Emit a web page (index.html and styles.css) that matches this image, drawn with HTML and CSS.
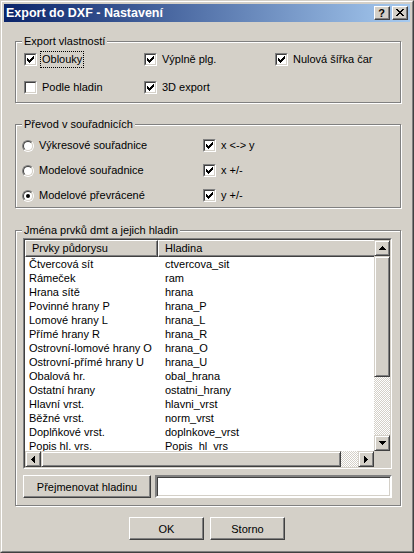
FILE: index.html
```html
<!DOCTYPE html>
<html lang="cs">
<head>
<meta charset="utf-8">
<title>Export do DXF - Nastavení</title>
<link rel="stylesheet" href="styles.css">
</head>
<body>
<div class="window">
  <div class="frame">
    <div class="titlebar">
      <span class="title">Export do DXF - Nastavení</span>
      <div class="tbtns">
        <span class="tbtn raised help">?</span>
        <span class="tbtn raised close"><svg width="8" height="7" viewBox="0 0 8 7" shape-rendering="crispEdges"><path d="M0 0h2v1H0z M6 0h2v1H6z M1 1h2v1H1z M5 1h2v1H5z M2 2h4v1H2z M3 3h2v1H3z M2 4h4v1H2z M1 5h2v1H1z M5 5h2v1H5z M0 6h2v1H0z M6 6h2v1H6z" fill="#000"/></svg></span>
      </div>
    </div>

    <div class="body">
      <div class="group g1">
        <div class="gtitle">Export vlastností</div>
        <div class="g1grid">
          <div class="opt"><span class="cb"><span class="cbi"><svg class="chk" width="7" height="7" viewBox="0 0 7 7" shape-rendering="crispEdges"><path d="M0 2V5H1V6H2V7H3V6H4V5H5V4H6V3H7V0H6V1H5V2H4V3H3V4H2V3H1V2Z" fill="#000"/></svg></span></span><span class="lbl focus">Oblouky</span></div>
          <div class="opt"><span class="cb"><span class="cbi"><svg class="chk" width="7" height="7" viewBox="0 0 7 7" shape-rendering="crispEdges"><path d="M0 2V5H1V6H2V7H3V6H4V5H5V4H6V3H7V0H6V1H5V2H4V3H3V4H2V3H1V2Z" fill="#000"/></svg></span></span><span class="lbl">Výplně plg.</span></div>
          <div class="opt"><span class="cb"><span class="cbi"><svg class="chk" width="7" height="7" viewBox="0 0 7 7" shape-rendering="crispEdges"><path d="M0 2V5H1V6H2V7H3V6H4V5H5V4H6V3H7V0H6V1H5V2H4V3H3V4H2V3H1V2Z" fill="#000"/></svg></span></span><span class="lbl">Nulová šířka čar</span></div>
          <div class="opt"><span class="cb"><span class="cbi"></span></span><span class="lbl">Podle hladin</span></div>
          <div class="opt"><span class="cb"><span class="cbi"><svg class="chk" width="7" height="7" viewBox="0 0 7 7" shape-rendering="crispEdges"><path d="M0 2V5H1V6H2V7H3V6H4V5H5V4H6V3H7V0H6V1H5V2H4V3H3V4H2V3H1V2Z" fill="#000"/></svg></span></span><span class="lbl">3D export</span></div>
        </div>
      </div>

      <div class="group g2">
        <div class="gtitle">Převod v souřadnicích</div>
        <div class="g2grid">
          <div class="opt"><span class="rd"><span class="rdi"></span></span><span class="lbl">Výkresové souřadnice</span></div>
          <div class="opt"><span class="cb"><span class="cbi"><svg class="chk" width="7" height="7" viewBox="0 0 7 7" shape-rendering="crispEdges"><path d="M0 2V5H1V6H2V7H3V6H4V5H5V4H6V3H7V0H6V1H5V2H4V3H3V4H2V3H1V2Z" fill="#000"/></svg></span></span><span class="lbl">x &lt;-&gt; y</span></div>
          <div class="opt"><span class="rd"><span class="rdi"></span></span><span class="lbl">Modelové souřadnice</span></div>
          <div class="opt"><span class="cb"><span class="cbi"><svg class="chk" width="7" height="7" viewBox="0 0 7 7" shape-rendering="crispEdges"><path d="M0 2V5H1V6H2V7H3V6H4V5H5V4H6V3H7V0H6V1H5V2H4V3H3V4H2V3H1V2Z" fill="#000"/></svg></span></span><span class="lbl">x +/-</span></div>
          <div class="opt"><span class="rd"><span class="rdi"><span class="dot"></span></span></span><span class="lbl">Modelové převrácené</span></div>
          <div class="opt"><span class="cb"><span class="cbi"><svg class="chk" width="7" height="7" viewBox="0 0 7 7" shape-rendering="crispEdges"><path d="M0 2V5H1V6H2V7H3V6H4V5H5V4H6V3H7V0H6V1H5V2H4V3H3V4H2V3H1V2Z" fill="#000"/></svg></span></span><span class="lbl">y +/-</span></div>
        </div>
      </div>

      <div class="group g3">
        <div class="gtitle">Jména prvků dmt a jejich hladin</div>
        <div class="g3in">
          <div class="list">
            <div class="list-in">
              <div class="view">
                <div class="lhead">
                  <div class="hcell raised hc1">Prvky půdorysu</div>
                  <div class="hcell raised hc2">Hladina</div>
                </div>
                <div class="rows">
                  <div class="c1">Čtvercová sít</div><div class="c2">ctvercova_sit</div>
                  <div class="c1">Rámeček</div><div class="c2">ram</div>
                  <div class="c1">Hrana sítě</div><div class="c2">hrana</div>
                  <div class="c1">Povinné hrany P</div><div class="c2">hrana_P</div>
                  <div class="c1">Lomové hrany L</div><div class="c2">hrana_L</div>
                  <div class="c1">Přímé hrany R</div><div class="c2">hrana_R</div>
                  <div class="c1">Ostrovní-lomové hrany O</div><div class="c2">hrana_O</div>
                  <div class="c1">Ostrovní-přímé hrany U</div><div class="c2">hrana_U</div>
                  <div class="c1">Obalová hr.</div><div class="c2">obal_hrana</div>
                  <div class="c1">Ostatní hrany</div><div class="c2">ostatni_hrany</div>
                  <div class="c1">Hlavní vrst.</div><div class="c2">hlavni_vrst</div>
                  <div class="c1">Běžné vrst.</div><div class="c2">norm_vrst</div>
                  <div class="c1">Doplňkové vrst.</div><div class="c2">doplnkove_vrst</div>
                  <div class="c1">Popis hl. vrs.</div><div class="c2">Popis_hl_vrs</div>
                </div>
              </div>
              <div class="vscroll">
                <div class="sbtn"><svg width="7" height="4" viewBox="0 0 7 4" shape-rendering="crispEdges"><path d="M3 0h1v1h1v1h1v1h1v1H0V3h1V2h1V1h1z" fill="#000"/></svg></div>
                <div class="sbtn vthumb"></div>
                <div class="track"></div>
                <div class="sbtn"><svg width="7" height="4" viewBox="0 0 7 4" shape-rendering="crispEdges"><path d="M0 0h7v1H6v1H5v1H4v1H3V3H2V2H1V1H0z" fill="#000"/></svg></div>
              </div>
              <div class="hscroll">
                <div class="sbtn"><svg width="4" height="7" viewBox="0 0 4 7" shape-rendering="crispEdges"><path d="M3 0h1v7H3V6H2V5H1V4H0V3h1V2h1V1h1z" fill="#000"/></svg></div>
                <div class="sbtn hthumb"></div>
                <div class="track"></div>
                <div class="sbtn"><svg width="4" height="7" viewBox="0 0 4 7" shape-rendering="crispEdges"><path d="M0 0h1v1h1v1h1v1h1v1H3v1H2v1H1v1H0z" fill="#000"/></svg></div>
              </div>
              <div class="corner"></div>
            </div>
          </div>
          <div class="rename">
            <div class="btn raised rbtn">Přejmenovat hladinu</div>
            <div class="input"></div>
          </div>
        </div>
      </div>

      <div class="actions">
        <div class="btn raised abtn">OK</div>
        <div class="btn raised abtn">Storno</div>
      </div>
    </div>
  </div>
</div>
</body>
</html>
```

FILE: styles.css
```css
* { box-sizing: border-box; }
html, body { margin: 0; padding: 0; }
body {
  width: 414px;
  height: 553px;
  overflow: hidden;
  font-family: "Liberation Sans", Arial, sans-serif;
  font-size: 11px;
  color: #000;
  background: #D4D0C8;
}
.window {
  width: 414px;
  height: 553px;
  border: 1px solid;
  border-color: #D4D0C8 #404040 #404040 #D4D0C8;
  background: #D4D0C8;
}
.frame {
  height: 100%;
  border: 1px solid;
  border-color: #fff #808080 #808080 #fff;
  padding: 2px;
  display: flex;
  flex-direction: column;
}
.titlebar {
  height: 18px;
  flex: none;
  display: flex;
  align-items: center;
  justify-content: space-between;
  padding: 0 2px;
  background: linear-gradient(to right, #0A246A, #A6CAF0);
}
.title {
  color: #fff;
  font-weight: bold;
  font-size: 12.5px;
  line-height: 18px;
  white-space: nowrap;
}
.tbtns { display: flex; gap: 2px; }
.raised {
  background: #D4D0C8;
  border: 1px solid;
  border-color: #fff #404040 #404040 #fff;
  box-shadow: inset -1px -1px #808080;
}
.tbtn {
  width: 16px;
  height: 14px;
  display: flex;
  align-items: center;
  justify-content: center;
}
.tbtn svg { display: block; }
.help {
  font-weight: bold;
  font-size: 11px;
  line-height: 12px;
  padding-right: 1px;
}
.close { padding: 0 1px 1px 0; }

.body {
  flex: 1;
  display: flex;
  flex-direction: column;
  padding: 0 9px 0 11px;
}
.group {
  border: 1px solid #808080;
  box-shadow: inset 1px 1px #fff, 1px 1px #fff;
}
.gtitle {
  width: max-content;
  height: 12px;
  margin: -7px 0 0 6px;
  padding: 0 2px;
  line-height: 12px;
  background: #D4D0C8;
  white-space: nowrap;
}
.g1 { margin-top: 19px; }
.g2 { margin-top: 21px; }
.g3 { margin-top: 22px; }

.g1grid {
  display: grid;
  grid-template-columns: 120px 131px 1fr;
  grid-auto-rows: 13px;
  row-gap: 15px;
  padding: 6px 0 8px 8px;
}
.g2grid {
  display: grid;
  grid-template-columns: 181px 1fr;
  grid-auto-rows: 13px;
  row-gap: 12px;
  padding: 9px 0 5px 6px;
}
.opt {
  display: flex;
  align-items: center;
  gap: 5px;
  height: 13px;
  white-space: nowrap;
}
.lbl { line-height: 13px; }
.focus {
  border: 1px dotted #000;
  padding: 1px 1px;
  margin-left: -2px;
}
.cb {
  width: 13px;
  height: 13px;
  flex: none;
  border: 1px solid;
  border-color: #808080 #fff #fff #808080;
}
.cbi {
  width: 100%;
  height: 100%;
  display: flex;
  align-items: center;
  justify-content: center;
  border: 1px solid;
  border-color: #404040 #D4D0C8 #D4D0C8 #404040;
  background: #fff;
}
.chk { display: block; }
.rd {
  width: 12px;
  height: 12px;
  flex: none;
  border-radius: 50%;
  border: 1px solid;
  border-color: #808080 #fff #fff #808080;
}
.rdi {
  width: 100%;
  height: 100%;
  display: flex;
  align-items: center;
  justify-content: center;
  border-radius: 50%;
  border: 1px solid;
  border-color: #404040 #D4D0C8 #D4D0C8 #404040;
  background: #fff;
}
.dot {
  width: 4px;
  height: 4px;
  border-radius: 50%;
  background: #000;
}

.g3in { padding: 2px 8px 7px 7px; }
.list {
  width: 369px;
  height: 231px;
  border: 1px solid;
  border-color: #808080 #fff #fff #808080;
}
.list-in {
  height: 100%;
  display: grid;
  grid-template-columns: 1fr 16px;
  grid-template-rows: 1fr 16px;
  border: 1px solid;
  border-color: #404040 #D4D0C8 #D4D0C8 #404040;
  background: #fff;
}
.view { overflow: hidden; min-width: 0; min-height: 0; }
.lhead { display: flex; height: 17px; }
.hcell {
  flex: none;
  height: 17px;
  line-height: 15px;
  padding-left: 6px;
  white-space: nowrap;
}
.hc1 { width: 133px; }
.hc2 { width: 320px; }
.rows {
  display: grid;
  grid-template-columns: 134px max-content;
  grid-auto-rows: 14px;
  line-height: 14px;
  white-space: nowrap;
}
.c1 { padding-left: 4px; overflow: hidden; }
.c2 { padding-left: 6px; }

.vscroll { display: flex; flex-direction: column; }
.hscroll { display: flex; }
.sbtn {
  width: 16px;
  height: 16px;
  flex: none;
  display: flex;
  align-items: center;
  justify-content: center;
  background: #D4D0C8;
  border: 1px solid;
  border-color: #D4D0C8 #404040 #404040 #D4D0C8;
  box-shadow: inset 1px 1px #fff, inset -1px -1px #808080;
}
.sbtn svg { display: block; }
.vthumb { height: 121px; }
.hthumb { width: 300px; }
.track {
  flex: 1;
  background-color: #D4D0C8;
  background-image: repeating-conic-gradient(#fff 0% 25%, #D4D0C8 0% 50%);
  background-size: 2px 2px;
}
.corner { background: #D4D0C8; }

.rename {
  display: flex;
  gap: 4px;
  width: 369px;
  height: 23px;
  margin-top: 6px;
}
.btn {
  display: flex;
  align-items: center;
  justify-content: center;
  white-space: nowrap;
}
.rbtn { width: 128px; flex: none; }
.input {
  flex: 1;
  border: 2px solid;
  border-color: #808080 #fff #fff #808080;
  box-shadow: inset 1px 1px #404040, inset -1px -1px #D4D0C8;
  background: #fff;
}
.actions {
  display: flex;
  justify-content: center;
  gap: 6px;
  margin-top: 11px;
  margin-right: 2px;
}
.abtn { width: 75px; height: 23px; }
```
